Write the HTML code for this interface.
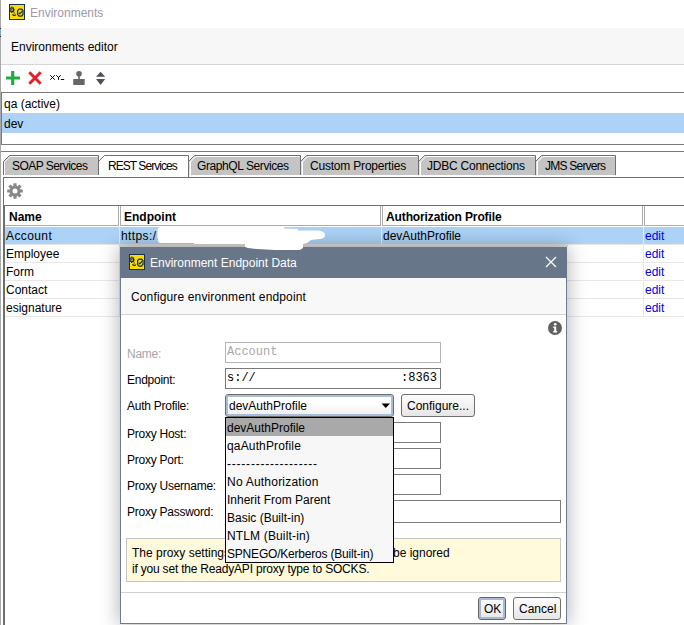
<!DOCTYPE html>
<html><head><meta charset="utf-8">
<style>
*{box-sizing:border-box;margin:0;padding:0}
html,body{width:684px;height:625px;overflow:hidden;background:#fff}
body{position:relative;font-family:"Liberation Sans",sans-serif;font-size:12px;color:#000}
.a{position:absolute}
.t{position:absolute;white-space:pre;line-height:14px;height:14px}
.b{font-weight:bold}
.m{font-family:"Liberation Mono",monospace}
.hl{position:absolute;height:1px}
.vl{position:absolute;width:1px}
.fld{position:absolute;background:#fff;border:1px solid #7a7a7a}
.btn{position:absolute;border:1px solid #707070;border-radius:3px;background:linear-gradient(#fdfdfd,#f2f2f2 50%,#e6e6e6)}
</style></head><body>

<!-- left edge -->
<div class="vl" style="left:0;top:0;height:625px;background:#a9a9a9"></div>
<div class="vl" style="left:0;top:28px;height:9px;background:#7ea6b9;border-top:1px solid #2b3a44;border-bottom:1px solid #2b3a44"></div>

<!-- title row -->
<svg class="a" style="left:9px;top:4px" width="16" height="16" viewBox="0 0 16 16">
 <rect x="0.5" y="0.5" width="15" height="15" fill="#ffdc00" stroke="#15304c"/>
 <g fill="none" stroke="#15304c" stroke-width="1.25">
  <circle cx="2.8" cy="5.8" r="1.9"/>
  <path d="M2.8 2.6v1.2M2.8 7.8v1.2M4.7 5.8h0.8M4.3 4.2l0.6-0.6M4.3 7.4l0.6 0.6"/>
  <path d="M3.6 10.2a1.8 1.8 0 0 0 3.3 0.2M5.3 9.6v-1.2" stroke-width="1.2"/>
  <path d="M8.6 6.6L10 5.2H12.6L14 6.6V10.4L12.6 12H10L8.6 10.6Z"/>
  <path d="M9.7 8.6l1.2 1.2 2.2-2.6" stroke-width="1.2"/>
 </g>
 <circle cx="2.8" cy="5.8" r="0.7" fill="#15304c"/>
</svg>
<div class="t" style="left:30px;top:6px;color:#9c9aa6">Environments</div>

<!-- header panel -->
<div class="a" style="left:1px;top:28px;width:683px;height:36px;background:#f7f7f7"></div>
<div class="t" style="left:11px;top:40px">Environments editor</div>
<div class="hl" style="left:1px;top:64px;width:683px;background:#d6d6d6"></div>

<!-- toolbar -->
<svg class="a" style="left:0;top:64px" width="120" height="28" viewBox="0 64 120 28">
 <path d="M6 78h14M12.7 71v14" stroke="#21ab42" stroke-width="3.2"/>
 <path d="M29.3 72.3l11.4 11.4M40.7 72.3l-11.4 11.4" stroke="#e71e26" stroke-width="3"/>
 <g stroke="#000" stroke-width="0.95" fill="none" stroke-linecap="round">
  <path d="M50.5 75.5L54.5 79.5M54.5 75.5L50.5 79.5M56.5 75.5L58.5 77.5L60.5 75.5M58.5 77.5V79.5M61.2 79.5H63.8"/>
 </g>
 <circle cx="79" cy="73.8" r="2.8" fill="#666"/>
 <rect x="78.2" y="75.5" width="1.6" height="4" fill="#666"/>
 <rect x="73.2" y="79" width="11.5" height="5.9" rx="0.6" fill="#666"/>
 <path d="M96 76.8L100.6 71.8L105.2 76.8z M96 79.1L105.2 79.1L100.6 85z" fill="#4a525c"/>
</svg>

<!-- env list -->
<div class="hl" style="left:1px;top:92px;width:683px;background:#7a7a7a"></div>
<div class="vl" style="left:1px;top:92px;height:53px;background:#7a7a7a"></div>
<div class="t" style="left:4px;top:97px">qa (active)</div>
<div class="a" style="left:2px;top:113px;width:682px;height:20px;background:#acd2f6"></div>
<div class="t" style="left:4px;top:117px">dev</div>
<div class="hl" style="left:1px;top:144px;width:683px;background:#7a7a7a"></div>
<div class="hl" style="left:1px;top:151px;width:683px;background:#7a7a7a"></div>

<!-- tabs -->
<svg class="a" style="left:0;top:150px" width="684" height="30" viewBox="0 150 684 30">
 <g fill="#c4c4c4">
  <path d="M3.5 175V161.5L9.5 155.5H98.5V175z"/>
  <path d="M189.5 175V161.5L195.5 155.5H300.5V175z"/>
  <path d="M301.5 175V161.5L307.5 155.5H418.5V175z"/>
  <path d="M419.5 175V161.5L425.5 155.5H535.5V175z"/>
  <path d="M536.5 175V161.5L542.5 155.5H615.5V175z"/>
 </g>
 <path d="M99.5 177V161.5L105.5 155.5H188.5V177z" fill="#fff"/>
 <g fill="none" stroke="#fff">
  <path d="M4.5 175V162L10 156.5H97.5"/>
  <path d="M190.5 175V162L196 156.5H299.5"/>
  <path d="M302.5 175V162L308 156.5H417.5"/>
  <path d="M420.5 175V162L426 156.5H534.5"/>
  <path d="M537.5 175V162L543 156.5H614.5"/>
 </g>
 <g fill="none" stroke="#6f6f6f">
  <path d="M3.5 175V161.5L9.5 155.5H98.5V175"/>
  <path d="M98.5 161.5L104.5 155.5H188.5V177"/>
  <path d="M188.5 161.5L194.5 155.5H300.5V175"/>
  <path d="M300.5 161.5L306.5 155.5H418.5V175"/>
  <path d="M418.5 161.5L424.5 155.5H535.5V175"/>
  <path d="M535.5 161.5L541.5 155.5H615.5V175"/>
 </g>
</svg>
<div class="t" style="left:12px;top:159px;letter-spacing:-0.55px">SOAP Services</div>
<div class="t" style="left:108px;top:159px;letter-spacing:-0.95px">REST Services</div>
<div class="t" style="left:197px;top:159px;letter-spacing:-0.41px">GraphQL Services</div>
<div class="t" style="left:310px;top:159px;letter-spacing:-0.2px">Custom Properties</div>
<div class="t" style="left:427px;top:159px;letter-spacing:-0.23px">JDBC Connections</div>
<div class="t" style="left:545px;top:159px;letter-spacing:-0.77px">JMS Servers</div>
<div class="hl" style="left:3px;top:177px;width:681px;background:#6f6f6f"></div>

<!-- content panel -->
<div class="vl" style="left:3px;top:177px;height:448px;background:#6e6e6e"></div>
<svg class="a" style="left:7px;top:183px" width="16" height="16" viewBox="-8 -8 16 16">
 <g fill="#888">
  <circle r="5.6"/>
  <g id="tooth"><rect x="-1.6" y="-7.8" width="3.2" height="3.5" rx="0.4"/></g>
  <use href="#tooth" transform="rotate(45)"/><use href="#tooth" transform="rotate(90)"/><use href="#tooth" transform="rotate(135)"/>
  <use href="#tooth" transform="rotate(180)"/><use href="#tooth" transform="rotate(225)"/><use href="#tooth" transform="rotate(270)"/><use href="#tooth" transform="rotate(315)"/>
 </g>
 <circle r="2.5" fill="#fff"/>
</svg>

<!-- table -->
<div class="vl" style="left:4px;top:205px;height:420px;background:#6e6e6e"></div>
<div class="hl" style="left:4px;top:205px;width:680px;background:#6e6e6e"></div>
<div class="a" style="left:5px;top:206px;width:114px;height:20px;border-right:1px solid #acacac;border-bottom:1px solid #acacac"></div>
<div class="a" style="left:120px;top:206px;width:261px;height:20px;border-left:1px solid #acacac;border-right:1px solid #acacac;border-bottom:1px solid #acacac"></div>
<div class="a" style="left:382px;top:206px;width:261px;height:20px;border-left:1px solid #acacac;border-right:1px solid #acacac;border-bottom:1px solid #acacac"></div>
<div class="a" style="left:644px;top:206px;width:50px;height:20px;border-left:1px solid #acacac;border-bottom:1px solid #acacac"></div>
<div class="t b" style="left:9px;top:210px">Name</div>
<div class="t b" style="left:124px;top:210px">Endpoint</div>
<div class="t b" style="left:386px;top:210px;letter-spacing:-0.12px">Authorization Profile</div>

<div class="a" style="left:5px;top:227px;width:679px;height:17px;background:#acd2f6"></div>
<div class="hl" style="left:5px;top:244px;width:679px;background:#e8e8e8"></div>
<div class="hl" style="left:5px;top:262px;width:679px;background:#e8e8e8"></div>
<div class="hl" style="left:5px;top:280px;width:679px;background:#e8e8e8"></div>
<div class="hl" style="left:5px;top:298px;width:679px;background:#e8e8e8"></div>
<div class="hl" style="left:5px;top:316px;width:679px;background:#e8e8e8"></div>
<div class="vl" style="left:119px;top:226px;height:91px;background:#e8e8e8"></div>
<div class="vl" style="left:381px;top:226px;height:91px;background:#e8e8e8"></div>
<div class="vl" style="left:643px;top:226px;height:91px;background:#e8e8e8"></div>
<div class="t" style="left:6px;top:229px;letter-spacing:0.4px">Account</div>
<div class="t" style="left:6px;top:247px">Employee</div>
<div class="t" style="left:6px;top:265px">Form</div>
<div class="t" style="left:6px;top:283px">Contact</div>
<div class="t" style="left:6px;top:301px">esignature</div>
<div class="t" style="left:121px;top:229px;letter-spacing:0.4px">https:/.</div>
<div class="t" style="left:383px;top:229px">devAuthProfile</div>
<div class="t" style="left:645px;top:229px;color:#0000e6">edit</div>
<div class="t" style="left:645px;top:247px;color:#0000e6">edit</div>
<div class="t" style="left:645px;top:265px;color:#0000e6">edit</div>
<div class="t" style="left:645px;top:283px;color:#0000e6">edit</div>
<div class="t" style="left:645px;top:301px;color:#0000e6">edit</div>


<!-- dialog -->
<div class="a" style="left:119px;top:244px;width:449px;height:3px;background:#dcdcdc"></div>
<div class="a" style="left:120px;top:247px;width:447px;height:377px;background:#fff;border:1px solid #6c7c92;box-shadow:0 0 18px 1px rgba(0,0,0,.3)"></div>
<div class="a" style="left:120px;top:247px;width:447px;height:31px;background:#677689"></div>
<svg class="a" style="left:150px;top:224px" width="190" height="30" viewBox="150 224 190 30">
 <path d="M157.5 231Q157.5 227 161 227L284 227L284 228.5L298 229L298 230.5L318 230.5Q325 231 325 235Q325 239 319 239L311 240L307 243L303 244L303 248L300 250L275 250L257 249L248 248L245 247L245 244L194 244L194 243L161 243Q157.5 243 157.5 239Z" fill="#fff"/>
</svg>
<svg class="a" style="left:129px;top:254px" width="16" height="16" viewBox="0 0 16 16">
 <rect x="0.5" y="0.5" width="15" height="15" fill="#ffdc00" stroke="#15304c"/>
 <g fill="none" stroke="#15304c" stroke-width="1.25">
  <circle cx="2.8" cy="5.8" r="1.9"/>
  <path d="M2.8 2.6v1.2M2.8 7.8v1.2M4.7 5.8h0.8M4.3 4.2l0.6-0.6M4.3 7.4l0.6 0.6"/>
  <path d="M3.6 10.2a1.8 1.8 0 0 0 3.3 0.2M5.3 9.6v-1.2" stroke-width="1.2"/>
  <path d="M8.6 6.6L10 5.2H12.6L14 6.6V10.4L12.6 12H10L8.6 10.6Z"/>
  <path d="M9.7 8.6l1.2 1.2 2.2-2.6" stroke-width="1.2"/>
 </g>
 <circle cx="2.8" cy="5.8" r="0.7" fill="#15304c"/>
</svg>
<div class="t" style="left:150px;top:256px;color:#fff">Environment Endpoint Data</div>
<svg class="a" style="left:545px;top:256px" width="12" height="12" viewBox="0 0 12 12">
 <path d="M1 1L11 11M11 1L1 11" stroke="#fff" stroke-width="1.2"/>
</svg>
<div class="a" style="left:121px;top:278px;width:445px;height:36px;background:#f8f8f8"></div>
<div class="hl" style="left:121px;top:314px;width:445px;background:#d2d2d2"></div>
<div class="t" style="left:131px;top:290px;letter-spacing:0.14px">Configure environment endpoint</div>
<svg class="a" style="left:548px;top:321px" width="14" height="14" viewBox="0 0 14 14">
 <circle cx="7" cy="7" r="7" fill="#606060"/>
 <circle cx="7.2" cy="3.3" r="1.3" fill="#fff"/>
 <path d="M5.3 5.6H8.2V9.9H9.2V11.4H5.2V9.9H6.2V7.1H5.3z" fill="#fff"/>
</svg>

<div class="t" style="left:127px;top:347px;letter-spacing:-0.25px;color:#a6a6a6">Name:</div>
<div class="t" style="left:127px;top:373px;letter-spacing:-0.25px">Endpoint:</div>
<div class="t" style="left:127px;top:399px;letter-spacing:-0.25px">Auth Profile:</div>
<div class="t" style="left:127px;top:427px;letter-spacing:-0.25px">Proxy Host:</div>
<div class="t" style="left:127px;top:453px;letter-spacing:-0.25px">Proxy Port:</div>
<div class="t" style="left:127px;top:479px;letter-spacing:-0.25px">Proxy Username:</div>
<div class="t" style="left:127px;top:505px;letter-spacing:-0.25px">Proxy Password:</div>

<div class="fld" style="left:225px;top:342px;width:216px;height:21px;border-color:#b4b4b4"></div>
<div class="t m" style="left:227px;top:345px;color:#a8a8a8">Account</div>
<div class="fld" style="left:225px;top:368px;width:216px;height:21px"></div>
<div class="t m" style="left:227px;top:371px">s://</div>
<div class="t m" style="left:401px;top:371px">:8363</div>

<div class="fld" style="left:225px;top:422px;width:216px;height:21px"></div>
<div class="fld" style="left:225px;top:448px;width:216px;height:21px"></div>
<div class="fld" style="left:225px;top:474px;width:216px;height:21px"></div>
<div class="fld" style="left:225px;top:500px;width:336px;height:23px"></div>

<!-- combo -->
<div class="a" style="left:225px;top:394px;width:169px;height:23px;border:1px solid #6f6f6f;border-radius:3px;background:linear-gradient(#fff,#fff 40%,#ededed);box-shadow:inset 0 0 0 2px #a9bcd8"></div>
<div class="t" style="left:229px;top:399px">devAuthProfile</div>
<svg class="a" style="left:381px;top:402px" width="10" height="7" viewBox="0 0 10 7"><path d="M0.5 1.5H9L4.75 6z" fill="#000"/></svg>
<div class="btn" style="left:401px;top:394px;width:74px;height:23px"></div>
<div class="t" style="left:407px;top:399px">Configure...</div>

<!-- yellow note -->
<div class="a" style="left:126px;top:538px;width:435px;height:44px;background:#fffadc;border:1px solid #c4c4c4"></div>
<div class="t" style="left:132px;top:546px">The proxy settings</div>
<div class="t" style="left:393px;top:546px">be ignored</div>
<div class="t" style="left:132px;top:562px;letter-spacing:-0.2px">if you set the ReadyAPI proxy type to SOCKS.</div>

<div class="hl" style="left:121px;top:592px;width:445px;background:#d2d2d2"></div>
<div class="btn" style="left:478px;top:597px;width:28px;height:23px;border-color:#666;box-shadow:inset 0 0 0 2px #a7b8d8,inset 0 -2px 0 #7d93bf"></div>
<div class="t" style="left:484px;top:602px">OK</div>
<div class="btn" style="left:513px;top:597px;width:48px;height:23px"></div>
<div class="t" style="left:519px;top:602px">Cancel</div>

<!-- popup list -->
<div class="a" style="left:225px;top:417px;width:169px;height:146px;background:#f7f7f7;border:1px solid #000"></div>
<div class="a" style="left:226px;top:418px;width:167px;height:18px;background:#a9a9a9"></div>
<div class="t" style="left:227px;top:421px">devAuthProfile</div>
<div class="t" style="left:227px;top:439px;letter-spacing:0.15px">qaAuthProfile</div>
<div class="t" style="left:227px;top:457px;letter-spacing:0.78px">-------------------</div>
<div class="t" style="left:227px;top:475px;letter-spacing:0.22px">No Authorization</div>
<div class="t" style="left:227px;top:493px">Inherit From Parent</div>
<div class="t" style="left:227px;top:511px">Basic (Built-in)</div>
<div class="t" style="left:227px;top:529px;letter-spacing:0.15px">NTLM (Built-in)</div>
<div class="t" style="left:227px;top:547px;letter-spacing:-0.2px">SPNEGO/Kerberos (Built-in)</div>

</body></html>
